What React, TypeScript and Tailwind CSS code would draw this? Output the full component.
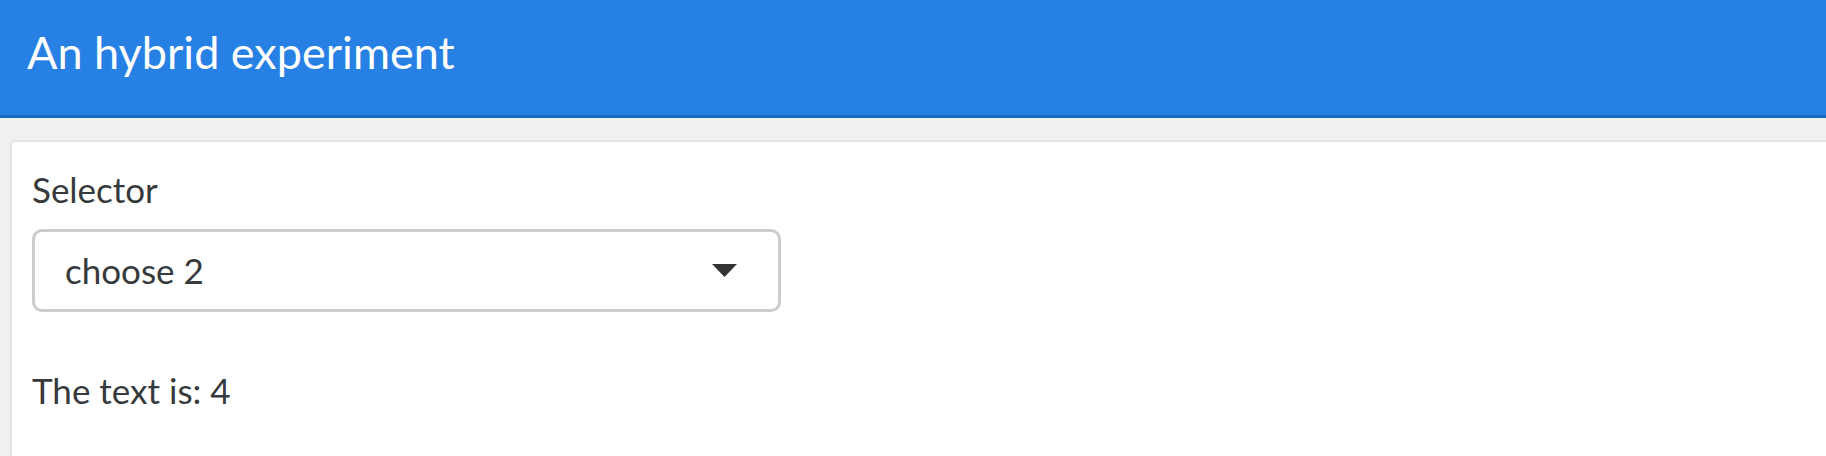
const CaretDown = () => (
  <svg width="25" height="13" viewBox="0 0 25 13" className="fill-[#333]">
    <path d="M0 0h25L12.5 13z" />
  </svg>
);

const App = () => (
  <div className="min-h-[456px] bg-[#f0f0f0] font-['Lato',sans-serif] text-[#373a3c]">
    <header className="h-[118px] border-b-[3px] border-[#1967be] bg-[#2780e3] pl-[27px] pt-[30px]">
      <h1 className="text-[45px] leading-none text-white">An hybrid experiment</h1>
    </header>

    <main className="pl-[10px] pt-[22px]">
      <div className="min-h-[316px] rounded-tl-[4px] border-l-2 border-t-2 border-[#e3e3e3] bg-white pl-[20px] pt-[30px]">
        <label className="block text-[35px] leading-none">Selector</label>
        <div className="mt-[22px] flex h-[83px] w-[749px] items-center justify-between rounded-[10px] border-[3px] border-[#cccccc] bg-white pl-[30px] pr-[41px]">
          <span className="text-[35px] leading-none">choose 2</span>
          <CaretDown />
        </div>
        <p className="mt-[61px] text-[35px] leading-none">The text is: 4</p>
      </div>
    </main>
  </div>
);

export default App;
